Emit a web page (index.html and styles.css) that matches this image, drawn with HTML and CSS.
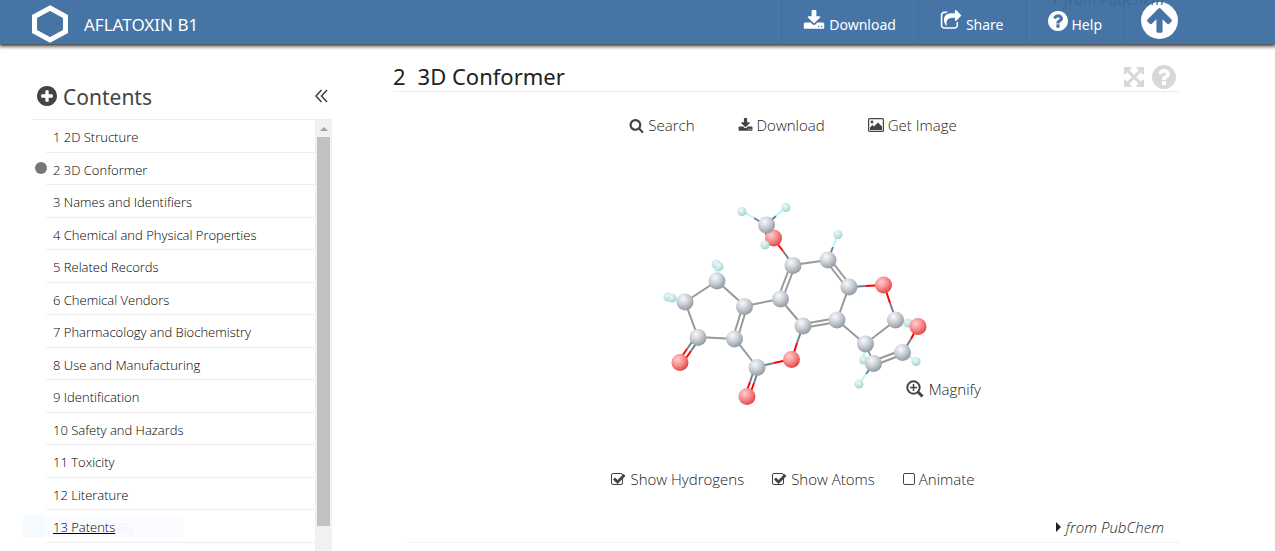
FILE: index.html
```html
<!DOCTYPE html>
<html lang="en">
<head>
<meta charset="utf-8">
<title>Aflatoxin B1 - 3D Conformer</title>
<link rel="stylesheet" href="styles.css">
</head>
<body>
<svg class="defs" aria-hidden="true">
  <defs>
    <radialGradient id="gc" cx="38%" cy="30%" r="75%"><stop offset="0" stop-color="#f8fafb"/><stop offset=".45" stop-color="#cdd2d8"/><stop offset="1" stop-color="#8a939e"/></radialGradient>
    <radialGradient id="go" cx="36%" cy="32%" r="75%"><stop offset="0" stop-color="#ffcfcf"/><stop offset=".5" stop-color="#f98b8c"/><stop offset="1" stop-color="#dc3a40"/></radialGradient>
    <radialGradient id="gh" cx="40%" cy="32%" r="75%"><stop offset="0" stop-color="#ecfafa"/><stop offset=".55" stop-color="#c6e4e4"/><stop offset="1" stop-color="#9ccaca"/></radialGradient>
    <symbol id="search" viewBox="0 0 1792 1792"><path d="M1216 832q0-185-131.500-316.500t-316.500-131.500-316.500 131.500-131.500 316.500 131.500 316.500 316.500 131.500 316.500-131.500 131.500-316.500zm512 832q0 52-38 90t-90 38q-54 0-90-38l-343-342q-179 124-399 124-143 0-273.500-55.500t-225-150-150-225-55.500-273.500 55.500-273.500 150-225 225-150 273.500-55.500 273.500 55.500 225 150 150 225 55.500 273.500q0 220-124 399l343 343q37 37 37 90z"/></symbol>
    <symbol id="download" viewBox="0 0 1792 1792"><path d="M1344 1344q0-26-19-45t-45-19-45 19-19 45 19 45 45 19 45-19 19-45zm256 0q0-26-19-45t-45-19-45 19-19 45 19 45 45 19 45-19 19-45zm128-224v320q0 40-28 68t-68 28h-1472q-40 0-68-28t-28-68v-320q0-40 28-68t68-28h465l135 136q58 56 136 56t136-56l136-136h464q40 0 68 28t28 68zm-325-569q17 41-14 70l-448 448q-18 19-45 19t-45-19l-448-448q-31-29-14-70 17-39 59-39h256v-448q0-26 19-45t45-19h256q26 0 45 19t19 45v448h256q42 0 59 39z"/></symbol>
    <symbol id="help" viewBox="128 128 1536 1536"><path d="M1024 1376v-192q0-14-9-23t-23-9h-192q-14 0-23 9t-9 23v192q0 14 9 23t23 9h192q14 0 23-9t9-23zm256-672q0-88-55.500-163t-138.500-116-170-41q-243 0-371 213-15 24 8 42l132 100q7 6 19 6 16 0 25-12 53-68 86-92 34-24 86-24 48 0 85.500 26t37.500 59q0 38-20 61t-68 45q-63 28-115.500 86.500t-52.500 125.500v36q0 14 9 23t23 9h192q14 0 23-9t9-23q0-19 21.500-49.500t54.500-49.500q32-18 49-28.500t46-35 44.500-48 28-60.500 12.500-81zm384 192q0 209-103 385.500t-279.500 279.500-385.500 103-385.500-103-279.500-279.500-103-385.500 103-385.500 279.500-279.500 385.500-103 385.500 103 279.500 279.500 103 385.500z"/></symbol>
    <symbol id="plus" viewBox="128 128 1536 1536"><path d="M1344 960v-128q0-26-19-45t-45-19h-256v-256q0-26-19-45t-45-19h-128q-26 0-45 19t-19 45v256h-256q-26 0-45 19t-19 45v128q0 26 19 45t45 19h256v256q0 26 19 45t45 19h128q26 0 45-19t19-45v-256h256q26 0 45-19t19-45zm320-64q0 209-103 385.500t-279.500 279.500-385.500 103-385.500-103-279.500-279.500-103-385.500 103-385.500 279.500-279.500 385.500-103 385.500 103 279.500 279.500 103 385.500z"/></symbol>
    <symbol id="up" viewBox="128 128 1536 1536"><path d="M1412 895q0-27-18-45l-362-362-91-91q-18-18-45-18t-45 18l-91 91-362 362q-18 18-18 45t18 45l91 91q18 18 45 18t45-18l189-189v502q0 26 19 45t45 19h128q26 0 45-19t19-45v-502l189 189q19 19 45 19t45-19l91-91q18-18 18-45zm252 1q0 209-103 385.500t-279.500 279.500-385.500 103-385.500-103-279.500-279.500-103-385.500 103-385.500 279.500-279.500 385.500-103 385.500 103 279.500 279.500 103 385.500z"/></symbol>
    <symbol id="share" viewBox="0 0 1792 1792"><path d="M1472 989v259q0 119-84.500 203.500t-203.500 84.500h-832q-119 0-203.500-84.500t-84.500-203.500v-832q0-119 84.500-203.500t203.500-84.500h255q13 0 22.500 9.500t9.500 22.500q0 27-26 32-77 26-133 60-10 4-16 4h-112q-66 0-113 47t-47 113v832q0 66 47 113t113 47h832q66 0 113-47t47-113v-214q0-19 18-29 28-13 54-37 16-16 35-8 21 9 21 29zm237-496l-384 384q-18 19-45 19-12 0-25-5-39-17-39-59v-192h-160q-323 0-438 131-119 137-74 473 3 23-20 34-8 2-12 2-16 0-26-13-10-14-21-31t-39.500-68.500-49.500-99.500-38.500-114-17.500-122q0-49 3.500-91t14-90 28-88 47-81.500 68.500-74 94.500-61.500 124.500-48.500 159.500-30.500 196.500-11h160v-192q0-42 39-59 13-5 25-5 26 0 45 19l384 384q19 19 19 45t-19 45z"/></symbol>
    <symbol id="expand" viewBox="128 128 1536 1536"><path d="M1411 541l-355 355 355 355 144-144q29-31 70-14 39 17 39 59v448q0 26-19 45t-45 19h-448q-42 0-59-40-17-39 14-69l144-144-355-355-355 355 144 144q31 30 14 69-17 40-59 40h-448q-26 0-45-19t-19-45v-448q0-42 40-59 39-17 69 14l144 144 355-355-355-355-144 144q-19 19-45 19-12 0-24-5-40-17-40-59v-448q0-26 19-45t45-19h448q42 0 59 40 17 39-14 69l-144 144 355 355 355-355-144-144q-31-30-14-69 17-40 59-40h448q26 0 45 19t19 45v448q0 42-39 59-13 5-25 5-26 0-45-19z"/></symbol>
  </defs>
</svg>

<header class="topbar">
  <a class="brand" href="#">
    <svg class="logo" viewBox="0 0 38 38"><path d="M19 3 34.500 11.500V26.500L19 35 3.500 26.500V11.500Z" fill="none" stroke="currentColor" stroke-width="5"/></svg>
    <span>AFLATOXIN B1</span>
  </a>
  <nav class="actions">
    <button class="action"><svg class="ic22"><use href="#download"/></svg>Download</button>
    <button class="action"><svg class="ic22"><use href="#share"/></svg>Share</button>
    <button class="action"><svg class="ic20"><use href="#help"/></svg>Help</button>
    <button class="action top" aria-label="Back to top"><svg class="ic36"><use href="#up"/></svg></button>
  </nav>
  <span class="under"><span class="caret"></span>from PubChem</span>
</header>

<div class="page">
  <aside class="sidebar">
    <div class="side-head">
      <button class="expand-all" aria-label="Expand all"><svg class="ic20"><use href="#plus"/></svg></button>
      <h2>Contents</h2>
      <button class="collapse" aria-label="Collapse contents"><svg viewBox="0 0 13 14"><path d="M6.500 1 1 7l5.500 6M12 1 6.500 7l5.500 6" fill="none" stroke="currentColor" stroke-width="1.600"/></svg></button>
    </div>
    <div class="side-body">
      <ol class="toc">
        <li><a href="#">1 2D Structure</a></li>
        <li class="current"><a href="#">2 3D Conformer</a></li>
        <li><a href="#">3 Names and Identifiers</a></li>
        <li><a href="#">4 Chemical and Physical Properties</a></li>
        <li><a href="#">5 Related Records</a></li>
        <li><a href="#">6 Chemical Vendors</a></li>
        <li><a href="#">7 Pharmacology and Biochemistry</a></li>
        <li><a href="#">8 Use and Manufacturing</a></li>
        <li><a href="#">9 Identification</a></li>
        <li><a href="#">10 Safety and Hazards</a></li>
        <li><a href="#">11 Toxicity</a></li>
        <li><a href="#">12 Literature</a></li>
        <li class="hovered"><a href="#">13 Patents</a><span class="key">(R)</span></li>
      </ol>
      <div class="scrollbar"><span class="arrow"></span><span class="thumb"></span></div>
    </div>
  </aside>

  <main class="content">
    <div class="section-head">
      <h1><span>2</span><span>3D Conformer</span></h1>
      <div class="tools">
        <button aria-label="Full screen"><svg class="ic20"><use href="#expand"/></svg></button>
        <button aria-label="Help"><svg class="ic24"><use href="#help"/></svg></button>
      </div>
    </div>
    <section class="conformer">
      <div class="toolbar">
        <button><svg class="ic15"><use href="#search"/></svg>Search</button>
        <button><svg class="ic15"><use href="#download"/></svg>Download</button>
        <button><svg class="pic" viewBox="0 0 16 14"><rect x=".6" y=".6" width="14.800" height="12.800" rx="1" fill="none" stroke="currentColor" stroke-width="1.200"/><circle cx="4" cy="4" r="1.400"/><path d="M2 12V9.500L4.500 7 6 8.500 10 4.500 14 8.500V12Z"/></svg>Get Image</button>
      </div>
      <div class="viewer">
        <svg class="molecule" viewBox="605 135 376 334" role="img" aria-label="Aflatoxin B1 ball and stick model">
          <g stroke="#999" stroke-width="2" fill="none">
            <path d="M685 302 717 281 745 306 780 299M685 302 698 337 735 339 757 367M793 265 828 260M849 287 837 320 865 344 896 320M780 299 803 326M865 344 874 363"/>
            <path d="M743 305 733 338M747 307 737 340M791 264 778 298M795 266 782 300M826 261 847 288M830 259 851 286M803 324 837 318M803 328 837 322M873 361 902 350M875 365 904 354"/>
          </g>
          <g stroke="#708090" stroke-width="2">
            <path d="M793 265 783 251M849 287 866 286M896 320 890 303M903 352 911 339M803 326 797 343M757 367 774 363M696 336 687 349M700 338 691 351M755 367 750 382M759 368 754 383M766 225 754 218M766 225 776 216M828 260 833 247M874 363 866 374M766 225V235"/>
          </g>
          <g stroke="#f00" stroke-width="2">
            <path d="M783 251 773 238M866 286 884 285M890 303 884 285M911 339 918 326M797 343 792 359M774 363 792 359M687 349 678 362M691 351 682 364M750 382 745 396M754 383 749 397"/>
          </g>
          <g stroke="#b0fafa" stroke-width="2">
            <path d="M754 218 742 211M776 216 786 207M833 247 838 234M866 374 859 384M865 344 863 360M896 320 908 323M903 352 916 361M685 302 670 298M717 281 719 266M715 281 716 264"/>
          </g>
          <g fill="url(#gh)">
            <circle cx="742" cy="211.500" r="4.500"/><circle cx="786" cy="207.500" r="4.500"/><circle cx="838" cy="234.500" r="4.500"/><circle cx="716" cy="264" r="4.500"/><circle cx="719" cy="266.500" r="4.500"/><circle cx="668" cy="297" r="4.500"/><circle cx="672" cy="298" r="4.500"/><circle cx="859" cy="384" r="4.500"/><circle cx="916" cy="361.500" r="4.500"/><circle cx="863.500" cy="360" r="4.500"/><circle cx="908" cy="323" r="4.500"/>
          </g>
          <g fill="url(#go)">
            <circle cx="773.500" cy="238" r="8.500"/><circle cx="883.500" cy="285" r="8.500"/><circle cx="680" cy="362.500" r="8.500"/><circle cx="747" cy="396.500" r="8.500"/><circle cx="791.500" cy="359.500" r="8.500"/><circle cx="918" cy="326.500" r="8.500"/>
          </g>
          <g fill="url(#gc)">
            <circle cx="766.500" cy="225" r="8.500"/><circle cx="793" cy="265.500" r="8.500"/><circle cx="828" cy="260" r="8.500"/><circle cx="849" cy="287" r="8.500"/><circle cx="780.500" cy="299" r="8.500"/><circle cx="717" cy="281" r="8.500"/><circle cx="685" cy="302" r="8.500"/><circle cx="744.500" cy="306.500" r="8.500"/><circle cx="698" cy="337.500" r="8.500"/><circle cx="734.500" cy="339" r="8.500"/><circle cx="757" cy="367.500" r="8.500"/><circle cx="803" cy="326" r="8.500"/><circle cx="837" cy="320" r="8.500"/><circle cx="865.500" cy="344" r="8.500"/><circle cx="895.500" cy="320" r="8.500"/><circle cx="902.500" cy="352.500" r="8.500"/><circle cx="873.500" cy="363.500" r="8.500"/>
          </g>
          <circle cx="765" cy="245" r="4.500" fill="url(#gh)"/>
        </svg>
        <button class="magnify"><svg class="ic18" viewBox="0 0 18 18"><circle cx="7.500" cy="7.500" r="6.200" fill="none" stroke="currentColor" stroke-width="2"/><path d="M7.500 4v7M4 7.500h7" stroke="currentColor" stroke-width="1.500"/><path d="M12 12 16.500 16.500" stroke="currentColor" stroke-width="3"/></svg>Magnify</button>
      </div>
      <div class="options">
        <label><span class="box"><input type="checkbox" checked><svg viewBox="0 0 15 13"><path d="M3 5.500 6.500 9 13.500 2" fill="none" stroke="currentColor" stroke-width="2.800"/></svg></span>Show Hydrogens</label>
        <label><span class="box"><input type="checkbox" checked><svg viewBox="0 0 15 13"><path d="M3 5.500 6.500 9 13.500 2" fill="none" stroke="currentColor" stroke-width="2.800"/></svg></span>Show Atoms</label>
        <label><span class="box"><input type="checkbox"><svg viewBox="0 0 15 13"><path d="M3 5.500 6.500 9 13.500 2" fill="none" stroke="currentColor" stroke-width="2.800"/></svg></span>Animate</label>
      </div>
      <div class="source"><a href="#"><span class="caret"></span>from PubChem</a></div>
    </section>
  </main>
</div>
</body>
</html>
```
FILE: styles.css
```css
* { box-sizing: border-box; }

body {
  margin: 0;
  background: #fff;
  color: #222;
  font: 300 15px/20px "Open Sans", "Noto Sans", sans-serif;
  overflow: hidden;
}

.defs { position: absolute; width: 0; height: 0; }

button {
  display: flex;
  align-items: center;
  gap: 4px;
  margin: 0;
  padding: 0;
  border: 0;
  background: none;
  color: inherit;
  font: inherit;
}

svg { fill: currentColor; flex: none; }
a { color: inherit; text-decoration: none; }

.page svg { color: #444; }

.ic15 { width: 15px; height: 15px; }
.ic18 { width: 18px; height: 18px; }
.ic20 { width: 20px; height: 20px; }
.ic22 { width: 22px; height: 22px; }
.ic24 { width: 24px; height: 24px; }
.ic36 { width: 37px; height: 37px; }

.topbar {
  position: relative;
  display: flex;
  justify-content: space-between;
  height: 44px;
  padding: 0 81px 0 31px;
  background: #4674a4;
  color: #fff;
  font-family: "Noto Sans", "Open Sans", sans-serif;
  font-size: 14px;
  font-weight: 400;
  box-shadow: 0 1px 4px 1px #222;
}

.brand {
  display: flex;
  align-items: center;
  gap: 15px;
  padding-top: 6px;
  font-size: 17px;
}

.logo { width: 38px; height: 38px; margin-bottom: 2px; }

.actions { display: flex; }

.action {
  padding: 6px 22px 0 21px;
  border-left: 1px solid #3f6d9d;
}

.action svg { margin-bottom: 8px; }
.action.top { padding: 0 16px; }
.action.top svg { margin-bottom: 4px; }

.under {
  position: absolute;
  right: 111px;
  top: -11px;
  display: flex;
  align-items: center;
  gap: 5px;
  color: #3d6996;
  font-family: "Open Sans", "Noto Sans", sans-serif;
  font-size: 15px;
  font-style: italic;
}

.page {
  display: grid;
  grid-template-columns: 300px 1fr;
  column-gap: 61px;
  padding: 0 96px 0 32px;
}

.side-head {
  display: flex;
  align-items: center;
  gap: 6px;
  height: 76px;
  padding: 30px 4px 0 5px;
  border-bottom: 1px solid #eee;
}

.side-head svg { margin-bottom: 2px; }

.side-head h2 {
  margin: 0;
  color: #444;
  font-family: "Noto Sans", "Open Sans", sans-serif;
  font-size: 21px;
  line-height: 28px;
  font-weight: 400;
}

.collapse { margin-left: auto; }
.collapse svg { width: 13px; height: 14px; }

.side-body { display: flex; }

.toc {
  flex: 1;
  margin: 0;
  padding: 0 0 8px 14px;
  list-style: none;
  color: #000;
  font-size: 13px;
}

.toc li {
  position: relative;
  display: flex;
  align-items: center;
  height: 32px;
  padding: 2px 0 0 7px;
  border-bottom: 1px solid #eee;
}

.toc li:nth-child(odd) { height: 33px; }

.current::before {
  content: "";
  position: absolute;
  left: -11px;
  top: 9px;
  width: 12px;
  height: 12px;
  border-radius: 50%;
  background: #777;
}

.hovered::before {
  content: "";
  position: absolute;
  z-index: -1;
  left: -23px;
  top: 5px;
  width: 160px;
  height: 22px;
  background: linear-gradient(90deg, #f5faff 22px, #fafcff 22px);
}

.hovered a { text-decoration: underline; }
.hovered .key { color: #f0f0f0; padding-left: 2px; }

.scrollbar {
  width: 17px;
  padding: 7px 2px 0;
  background: #f1f1f1;
}

.arrow {
  display: block;
  width: 8px;
  margin: 0 auto 6px;
  border: 4px solid transparent;
  border-top: 0;
  border-bottom-color: #a3a3a3;
}

.thumb {
  display: block;
  height: 389px;
  background: #c1c1c1;
}

.section-head {
  display: flex;
  align-items: center;
  justify-content: space-between;
  height: 48px;
  padding: 17px 3px 0 0;
  border-bottom: 1px solid #eee;
}

.section-head h1 {
  display: flex;
  gap: 12px;
  margin: 0;
  color: #212121;
  font-family: "Noto Sans", "Open Sans", sans-serif;
  font-size: 22px;
  line-height: 28px;
  font-weight: 400;
}

.tools { display: flex; align-items: center; gap: 8px; padding-top: 1px; }
.tools svg { color: #d8d8d8; }

.conformer {
  display: flex;
  flex-direction: column;
  align-items: center;
  padding: 23px 0 0 14px;
}

.toolbar { display: flex; gap: 43px; }
.pic { width: 16px; height: 14px; }

.viewer { position: relative; width: 376px; }
.molecule { display: block; width: 100%; }
.magnify { position: absolute; right: 0; bottom: 70px; gap: 5px; }

.options { display: flex; gap: 28px; }
.options label { display: flex; align-items: center; gap: 4px; }

.box { display: grid; }
.box > * { grid-area: 1 / 1; }
.box input {
  appearance: none;
  width: 12px;
  height: 12px;
  margin: 0;
  border: 1px solid #444;
  border-radius: 2px;
}
.box svg { display: none; width: 15px; height: 13px; }
.box input:checked + svg { display: block; }

.source {
  align-self: stretch;
  display: flex;
  justify-content: flex-end;
  margin-top: 28px;
  padding: 0 15px 5px 0;
  border-bottom: 1px dotted #e8e8e8;
  font-style: italic;
}

.source a { display: flex; align-items: center; gap: 5px; }

.caret {
  border: 5px solid transparent;
  border-left-color: currentColor;
  border-right: 0;
}
```
